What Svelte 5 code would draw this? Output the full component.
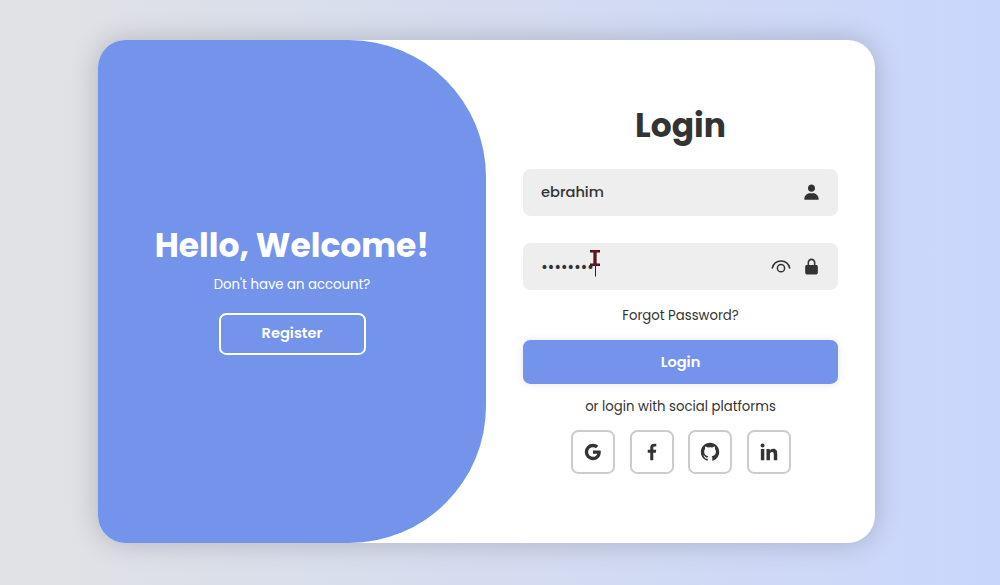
<script lang="ts">
  let username = $state('ebrahim');
  let password = $state('••••••••');

  const socials = [
    {
      name: 'Google',
      path: 'M20.283 10.356h-8.327v3.451h4.792c-.446 2.193-2.313 3.453-4.792 3.453a5.27 5.27 0 0 1-5.279-5.28 5.27 5.27 0 0 1 5.279-5.279c1.259 0 2.397.447 3.29 1.178l2.6-2.599c-1.584-1.381-3.615-2.233-5.89-2.233a8.908 8.908 0 0 0-8.934 8.934 8.907 8.907 0 0 0 8.934 8.934c4.467 0 8.529-3.249 8.529-8.934 0-.528-.081-1.097-.202-1.625z'
    },
    {
      name: 'Facebook',
      path: 'M13.397 20.997v-8.196h2.765l.411-3.209h-3.176V7.548c0-.926.258-1.56 1.587-1.56h1.684V3.127A22.336 22.336 0 0 0 14.201 3c-2.444 0-4.122 1.492-4.122 4.231v2.355H7.332v3.209h2.753v8.202h3.312z'
    },
    {
      name: 'GitHub',
      path: 'M12.026 2c-5.509 0-9.974 4.465-9.974 9.974 0 4.406 2.857 8.145 6.821 9.465.499.09.679-.217.679-.481 0-.237-.008-.865-.011-1.696-2.775.602-3.361-1.338-3.361-1.338-.452-1.152-1.107-1.459-1.107-1.459-.905-.619.069-.605.069-.605 1.002.07 1.527 1.028 1.527 1.028.89 1.524 2.336 1.084 2.902.829.091-.645.351-1.085.635-1.334-2.214-.251-4.542-1.107-4.542-4.93 0-1.087.389-1.979 1.024-2.675-.101-.253-.446-1.268.099-2.64 0 0 .837-.269 2.742 1.021a9.582 9.582 0 0 1 2.496-.336 9.554 9.554 0 0 1 2.496.336c1.906-1.291 2.742-1.021 2.742-1.021.545 1.372.203 2.387.099 2.64.64.696 1.024 1.587 1.024 2.675 0 3.833-2.33 4.675-4.552 4.922.355.308.675.916.675 1.846 0 1.334-.012 2.41-.012 2.737 0 .267.178.577.687.479C19.146 20.115 22 16.379 22 11.974 22 6.465 17.535 2 12.026 2z'
    },
    {
      name: 'LinkedIn',
      path: 'M4.983 2.821a2.188 2.188 0 1 0 0 4.376 2.188 2.188 0 0 0 0-4.376zM9.237 8.855v12.139h3.769v-6.003c0-1.584.298-3.118 2.262-3.118 1.937 0 1.961 1.811 1.961 3.218v5.904H21v-6.657c0-3.27-.704-5.783-4.526-5.783-1.835 0-3.065 1.007-3.568 1.96h-.051v-1.66H9.237zm-6.142 0H6.87v12.139H3.095z'
    }
  ];
</script>

<main class="page">
  <div class="container">
    <section class="welcome">
      <h1>Hello, Welcome!</h1>
      <p>Don't have an account?</p>
      <button class="register" type="button">Register</button>
    </section>

    <form class="login" onsubmit={(e) => e.preventDefault()}>
      <h1>Login</h1>

      <div class="input-box">
        <span class="value">{username}</span>
        <svg class="icon" viewBox="0 0 24 24">
          <path d="M7.5 6.5C7.5 8.981 9.519 11 12 11s4.5-2.019 4.5-4.5S14.481 2 12 2 7.5 4.019 7.5 6.5zM20 21h1v-1c0-3.859-3.141-7-7-7h-4c-3.86 0-7 3.141-7 7v1h17z" />
        </svg>
      </div>

      <div class="input-box">
        <span class="value dots">{password}</span>
        <svg class="eye" viewBox="0 0 20 15">
          <path d="M1.3 9C2.3 4.7 5.8 1.9 10 1.9s7.7 2.8 8.7 7.1" />
          <circle cx="10" cy="9.2" r="3.6" />
        </svg>
        <svg class="icon" viewBox="0 0 24 24">
          <path d="M20 12c0-1.103-.897-2-2-2h-1V7c0-2.757-2.243-5-5-5S7 4.243 7 7v3H6c-1.103 0-2 .897-2 2v8c0 1.103.897 2 2 2h12c1.103 0 2-.897 2-2v-8zM9 7c0-1.654 1.346-3 3-3s3 1.346 3 3v3H9V7z" />
        </svg>
        <!-- text pointer and caret -->
        <svg class="pointer" viewBox="0 0 12 28">
          <path class="beam" d="M1 1h10v2.4H7.6v11.2H11V17H1v-2.4h3.4V3.4H1z" />
          <path class="beam-core" d="M2 2.2h8M2 15.8h8M6 2.2v13.6" />
          <path class="caret" d="M6.5 17v10.5" />
        </svg>
      </div>

      <a class="forgot" href="#forgot">Forgot Password?</a>
      <button class="submit" type="submit">Login</button>
      <p class="or">or login with social platforms</p>

      <div class="socials">
        {#each socials as social}
          <a href="#{social.name}" aria-label={social.name}>
            <svg viewBox="0 0 24 24"><path d={social.path} /></svg>
          </a>
        {/each}
      </div>
    </form>
  </div>
</main>

<style>
  :global(body) {
    margin: 0;
  }

  * {
    box-sizing: border-box;
    margin: 0;
  }

  .page {
    height: 585px;
    padding: 40px 0 0 98px;
    overflow: hidden;
    background: linear-gradient(90deg, #e1e2e4, #c9d6fc);
    color: #333;
    font-family: Poppins, Inter, 'Open Sans', sans-serif;
  }

  .container {
    display: grid;
    grid-template-columns: 388px 389px;
    width: 777px;
    height: 503px;
    overflow: hidden;
    background: #fff;
    border-radius: 27.5px;
    box-shadow: 0 0 28px rgba(0, 0, 0, 0.2);
  }

  .welcome {
    display: flex;
    flex-direction: column;
    align-items: center;
    padding-top: 181px;
    background: #7494ec;
    border-radius: 0 137px 137px 0;
    color: #fff;
  }

  h1 {
    font-size: 32.9px;
    line-height: 50px;
    font-weight: 700;
    white-space: nowrap;
  }

  .welcome p {
    margin-top: 4px;
    font-size: 13.25px;
    line-height: 20px;
  }

  button {
    font-family: inherit;
    font-size: 14.6px;
    font-weight: 600;
    color: #fff;
    padding: 0;
    border-radius: 7.3px;
  }

  .register {
    width: 147px;
    height: 42px;
    margin-top: 18px;
    padding-bottom: 1px;
    background: transparent;
    border: 2px solid #fff;
  }

  .login {
    display: flex;
    flex-direction: column;
    align-items: center;
    padding: 61px 37px 0;
  }

  .input-box {
    position: relative;
    display: flex;
    align-items: center;
    gap: 11px;
    width: 315px;
    height: 47px;
    padding: 0 17.5px 0 18px;
    background: #eee;
    border-radius: 7.3px;
  }

  h1 + .input-box {
    margin: 18px 0 27px;
  }

  .value {
    flex: 1;
    font-size: 14.6px;
    font-weight: 500;
  }

  .dots {
    font-size: 15px;
    letter-spacing: -0.35px;
  }

  .icon {
    width: 19px;
    height: 19px;
    fill: #333;
  }

  .eye {
    width: 20px;
    height: 15px;
    fill: none;
    stroke: #333;
    stroke-width: 1.5;
    stroke-linecap: round;
  }

  .pointer {
    position: absolute;
    left: 66px;
    top: 6px;
    width: 12px;
    height: 28px;
  }

  .beam {
    fill: #3a1018;
  }

  .beam-core {
    fill: none;
    stroke: #7c1528;
    stroke-width: 1.3;
  }

  .caret {
    stroke: #222;
    stroke-width: 1;
  }

  .forgot {
    margin-top: 16px;
    font-size: 13.25px;
    line-height: 20px;
    color: #333;
    text-decoration: none;
  }

  .submit {
    width: 315px;
    height: 44px;
    margin-top: 14px;
    background: #7494ec;
    border: none;
    box-shadow: 0 0 9px rgba(0, 0, 0, 0.1);
  }

  .or {
    margin-top: 13px;
    font-size: 13.25px;
    line-height: 20px;
  }

  .socials {
    display: flex;
    gap: 14.6px;
    margin: 13.4px 0 0 1px;
  }

  .socials a {
    display: grid;
    place-items: center;
    width: 44px;
    height: 43.5px;
    border: 2px solid #ccc;
    border-radius: 7.3px;
  }

  .socials svg {
    width: 22px;
    height: 22px;
    fill: #333;
  }
</style>
